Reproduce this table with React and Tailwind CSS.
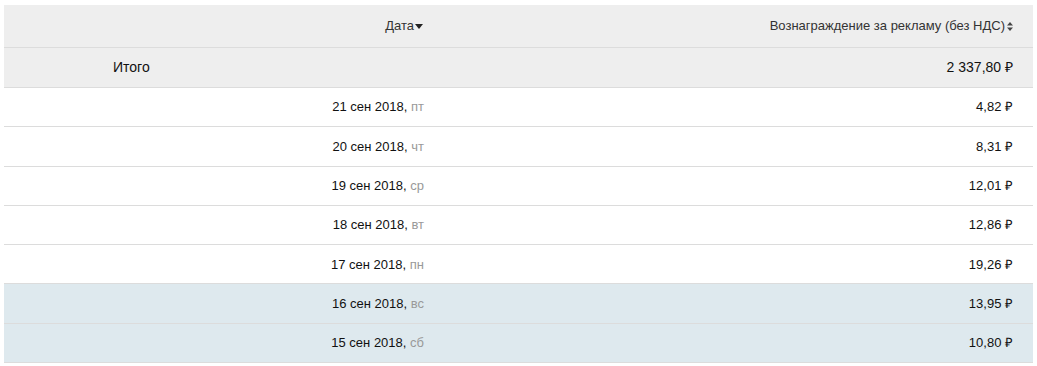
import React from 'react';

const rows = [
  { date: '21 сен 2018', day: 'пт', sum: '4,82', weekend: false },
  { date: '20 сен 2018', day: 'чт', sum: '8,31', weekend: false },
  { date: '19 сен 2018', day: 'ср', sum: '12,01', weekend: false },
  { date: '18 сен 2018', day: 'вт', sum: '12,86', weekend: false },
  { date: '17 сен 2018', day: 'пн', sum: '19,26', weekend: false },
  { date: '16 сен 2018', day: 'вс', sum: '13,95', weekend: true },
  { date: '15 сен 2018', day: 'сб', sum: '10,80', weekend: true },
];

function CaretDown() {
  return (
    <svg width="8" height="5" viewBox="0 0 8 5" className="ml-[1px] inline-block">
      <path d="M0 0 L8 0 L4 5 Z" fill="#222" />
    </svg>
  );
}

function SortIcon() {
  return (
    <svg width="6" height="9" viewBox="0 0 6 9" className="ml-[2px] inline-block">
      <path d="M0 3.5 L6 3.5 L3 0 Z" fill="#444" />
      <path d="M0 5.5 L6 5.5 L3 9 Z" fill="#444" />
    </svg>
  );
}

export default function App() {
  return (
    <div className="bg-white min-h-[366px] pt-[5px] px-[4px] font-['Liberation_Sans',Arial,sans-serif]">
      <div className="w-[1029px]">
        {/* head */}
        <div className="grid grid-cols-[441px_1fr] h-[43px] bg-[#eeeeee] border-b border-[#dcdcdc] text-[13px] text-[#333]">
          <div className="flex items-center justify-end pr-[22px]">
            Дата<CaretDown />
          </div>
          <div className="flex items-center justify-end pr-[20px]">
            Вознаграждение за рекламу (без НДС)<SortIcon />
          </div>
        </div>

        {/* total */}
        <div className="grid grid-cols-[441px_1fr] h-[40px] bg-[#eeeeee] border-b border-[#dcdcdc] text-[14px] text-[#111]">
          <div className="flex items-center pl-[109px]">Итого</div>
          <div className="flex items-center justify-end pr-[20px]">2 337,80 ₽</div>
        </div>

        {rows.map((r) => (
          <div
            key={r.date}
            className={`grid grid-cols-[441px_1fr] h-[39.3px] border-b border-[#dcdcdc] text-[13px] text-[#111] ${r.weekend ? 'bg-[#dee9ee]' : 'bg-white'}`}
          >
            <div className="flex items-center justify-end pr-[21px]">
              {r.date},&nbsp;<span className="text-[#999]">{r.day}</span>
            </div>
            <div className="flex items-center justify-end pr-[20px]">{r.sum} ₽</div>
          </div>
        ))}
      </div>
    </div>
  );
}
